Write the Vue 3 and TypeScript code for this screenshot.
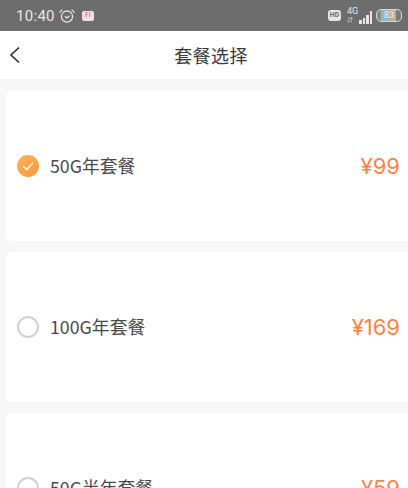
<script setup lang="ts">
interface Plan { name: string; price: string; selected: boolean }
const plans: Plan[] = [
  { name: '50G年套餐', price: '¥99', selected: true },
  { name: '100G年套餐', price: '¥169', selected: false },
  { name: '50G半年套餐', price: '¥59', selected: false },
]
</script>

<template>
  <div class="page">
    <div class="status">
      <div class="status-left">
        <span class="time">10:40</span>
        <svg class="alarm" width="18" height="16" viewBox="0 0 18 16" fill="none" stroke="#e4e4e4" stroke-width="1.3">
          <circle cx="9" cy="8.6" r="5.6" />
          <path d="M6.8 8.2 9 10l2.4-2.2" />
          <path d="M1.4 4.6 4.4 1.6M16.6 4.6l-3-3" />
        </svg>
        <span class="app-badge"><i>Fi</i></span>
      </div>
      <div class="status-right">
        <span class="hd">HD</span>
        <span class="signal">
          <span class="net-g">4G</span>
          <span class="net-a">⇵</span>
          <span class="bars"><i class="b1"></i><i class="b2"></i><i class="b3"></i><i class="b4"></i></span>
        </span>
        <span class="battery"><span class="bat-text">83</span></span>
      </div>
    </div>
    <div class="nav">
      <svg class="back" width="12" height="18" viewBox="0 0 12 18" fill="none" stroke="#333" stroke-width="1.7">
        <path d="M10 1.5 2 9l8 7.5" />
      </svg>
      <span class="title">套餐选择</span>
    </div>
    <div class="list">
      <div v-for="plan in plans" :key="plan.name" class="card">
        <div class="left">
          <span v-if="plan.selected" class="radio on">
            <svg width="22" height="22" viewBox="0 0 22 22" fill="none" stroke="#fff" stroke-width="1.4">
              <path d="M6.2 11.2 9.8 14.4 15.8 8" />
            </svg>
          </span>
          <span v-else class="radio"></span>
          <span class="name">{{ plan.name }}</span>
        </div>
        <span class="price">{{ plan.price }}</span>
      </div>
    </div>
  </div>
</template>

<style>
html, body { margin: 0; background: #f7f7f7; overflow: hidden; }
</style>

<style scoped>
.page {
  width: 408px;
  height: 488px;
  overflow: hidden;
  background: #f7f7f7;
  font-family: "Roboto", "Noto Sans CJK SC", sans-serif;
}
.status {
  height: 31px;
  background: #6d6d6d;
  display: flex;
  align-items: center;
  justify-content: space-between;
  padding: 0 6px 0 16px;
  box-sizing: border-box;
  color: #e6e6e6;
}
.status-left { display: flex; align-items: center; }
.time { font-size: 15px; letter-spacing: 0.3px; }
.alarm { margin-left: 3px; }
.app-badge {
  width: 12px;
  height: 10px;
  margin-left: 6px;
  background: #f3dfe2;
  border-radius: 2px;
  display: flex;
  align-items: center;
  justify-content: center;
}
.app-badge i { font-size: 7px; font-style: normal; color: #c8626e; line-height: 1; }
.status-right { display: flex; align-items: center; }
.hd {
  width: 13px;
  height: 11px;
  background: #e6e6e6;
  color: #6d6d6d;
  border-radius: 3px;
  font-size: 7px;
  font-weight: 700;
  line-height: 11px;
  text-align: center;
}
.signal {
  width: 26px;
  height: 17px;
  margin-left: 5px;
  position: relative;
  display: block;
}
.net-g { position: absolute; left: 1px; top: 0; font-size: 9px; line-height: 9px; }
.net-a { position: absolute; left: 1px; top: 10px; font-size: 6px; line-height: 6px; }
.bars { position: absolute; right: 0; bottom: 0; display: flex; align-items: flex-end; gap: 1px; height: 13px; }
.bars i { width: 2.5px; background: #e6e6e6; display: block; }
.b1 { height: 4px; }
.b2 { height: 6px; }
.b3 { height: 9px; }
.b4 { height: 13px; }
.battery {
  width: 24px;
  height: 11px;
  margin-left: 4px;
  border: 1px solid #d8d8d8;
  border-radius: 5px;
  background: linear-gradient(90deg, #8a8a8a 0 18%, #8fb7d0 18% 52%, #b9b48f 52% 80%, #7a7a7a 80%);
  display: flex;
  align-items: center;
  justify-content: center;
}
.bat-text { font-size: 9px; line-height: 1; color: #eee; }
.nav {
  height: 48px;
  background: #fff;
  position: relative;
  display: flex;
  align-items: center;
  justify-content: center;
  padding-left: 14px;
}
.back { position: absolute; left: 9px; top: 15px; }
.title { font-size: 18px; color: #3a3a3a; letter-spacing: 0.4px; margin-top: -1px; }
.list {
  padding: 12px 0 0 6px;
  display: flex;
  flex-direction: column;
  gap: 11px;
}
.card {
  height: 150px;
  flex: none;
  background: #fff;
  border-radius: 5px 0 0 5px;
  display: flex;
  align-items: center;
  justify-content: space-between;
  padding: 0 8px 0 11px;
}
.left { display: flex; align-items: center; }
.radio {
  width: 22px;
  height: 22px;
  box-sizing: border-box;
  border: 2px solid #d2d2d2;
  border-radius: 50%;
  flex: none;
}
.radio.on {
  border: 0;
  background: linear-gradient(135deg, #ffb45c, #ff9838);
  display: block;
}
.radio.on svg { display: block; }
.name { margin-left: 11px; font-size: 17.8px; color: #4a4a4a; margin-top: -2px; font-family: "Noto Sans CJK SC", sans-serif; }
.price { font-size: 22px; color: #ff8248; font-family: "Inter", "Noto Sans CJK SC", sans-serif; margin-top: -1px; }
</style>
